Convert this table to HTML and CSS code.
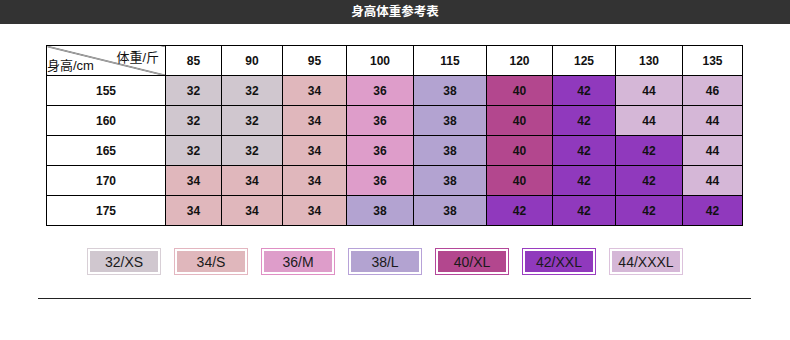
FILE: index.html
```html
<!DOCTYPE html>
<html lang="zh">
<head>
<meta charset="utf-8">
<link rel="stylesheet" href="styles.css">
</head>
<body>
<div class="title-bar">身高体重参考表</div>
<table class="size-table">
  <colgroup>
    <col class="c0"><col class="c1"><col class="c2"><col class="c3"><col class="c4"><col class="c5"><col class="c6"><col class="c7"><col class="c8"><col class="c9">
  </colgroup>
  <tr class="head">
    <th class="corner"><span class="w">体重/斤</span><span class="h">身高/cm</span></th>
    <th>85</th><th>90</th><th>95</th><th>100</th><th>115</th><th>120</th><th>125</th><th>130</th><th>135</th>
  </tr>
  <tr>
    <th>155</th>
    <td class="s32">32</td><td class="s32">32</td><td class="s34">34</td><td class="s36">36</td><td class="s38">38</td><td class="s40">40</td><td class="s42">42</td><td class="s44">44</td><td class="s44">46</td>
  </tr>
  <tr>
    <th>160</th>
    <td class="s32">32</td><td class="s32">32</td><td class="s34">34</td><td class="s36">36</td><td class="s38">38</td><td class="s40">40</td><td class="s42">42</td><td class="s44">44</td><td class="s44">44</td>
  </tr>
  <tr>
    <th>165</th>
    <td class="s32">32</td><td class="s32">32</td><td class="s34">34</td><td class="s36">36</td><td class="s38">38</td><td class="s40">40</td><td class="s42">42</td><td class="s42">42</td><td class="s44">44</td>
  </tr>
  <tr>
    <th>170</th>
    <td class="s34">34</td><td class="s34">34</td><td class="s34">34</td><td class="s36">36</td><td class="s38">38</td><td class="s40">40</td><td class="s42">42</td><td class="s42">42</td><td class="s44">44</td>
  </tr>
  <tr>
    <th>175</th>
    <td class="s34">34</td><td class="s34">34</td><td class="s34">34</td><td class="s38">38</td><td class="s38">38</td><td class="s42">42</td><td class="s42">42</td><td class="s42">42</td><td class="s42">42</td>
  </tr>
</table>
<div class="legend">
  <div class="chip b32"><span class="s32">32/XS</span></div>
  <div class="chip b34"><span class="s34">34/S</span></div>
  <div class="chip b36"><span class="s36">36/M</span></div>
  <div class="chip b38"><span class="s38">38/L</span></div>
  <div class="chip b40"><span class="s40">40/XL</span></div>
  <div class="chip b42"><span class="s42">42/XXL</span></div>
  <div class="chip b44"><span class="s44">44/XXXL</span></div>
</div>
<div class="rule"></div>
</body>
</html>
```
FILE: styles.css
```css
html, body {
  margin: 0;
  padding: 0;
  background: #fff;
  font-family: "Liberation Sans", Arial, "Noto Sans CJK SC", sans-serif;
  color: #111;
}
.title-bar {
  height: 24px;
  line-height: 24px;
  background: #333333;
  color: #fff;
  font-size: 12.5px;
  font-weight: bold;
  text-align: center;
}
.size-table {
  margin: 21px 0 0 46px;
  border-collapse: collapse;
  table-layout: fixed;
  width: 696px;
}
.c0 { width: 119px; }
.c1 { width: 56px; }
.c2 { width: 61px; }
.c3 { width: 64px; }
.c4 { width: 67px; }
.c5 { width: 73px; }
.c6 { width: 66px; }
.c7 { width: 63px; }
.c8 { width: 67px; }
.c9 { width: 60px; }
.size-table th, .size-table td {
  border: 1px solid #000;
  height: 29px;
  padding: 0;
  text-align: center;
  font-size: 12px;
  font-weight: bold;
  color: #111;
}
.size-table .corner {
  position: relative;
  font-weight: normal;
  font-size: 13px;
  background: linear-gradient(to top right, transparent calc(50% - 0.8px), #111 50%, transparent calc(50% + 0.8px));
}
.corner .w {
  position: absolute;
  right: 6px;
  top: 1px;
}
.corner .h {
  position: absolute;
  left: 0;
  bottom: 1px;
}
.s32 { background: #d0c7cf; }
.s34 { background: #e0b7bc; }
.s36 { background: #de9dca; }
.s38 { background: #b3a3d1; }
.s40 { background: #b3478e; }
.s42 { background: #9039bd; }
.s44 { background: #d5b7d7; }
.legend {
  display: flex;
  gap: 13px;
  margin: 22px 0 0 87px;
}
.chip {
  width: 74px;
  height: 27px;
  box-sizing: border-box;
  border: 1px solid;
  padding: 2px;
  background: #fff;
  display: flex;
}
.chip span {
  flex: 1;
  display: flex;
  align-items: center;
  justify-content: center;
  font-size: 14px;
  color: #1a1a1a;
}
.b32 { border-color: #d8cfd6; }
.b34 { border-color: #e3b6c0; }
.b36 { border-color: #df8fc4; }
.b38 { border-color: #b7a2d8; }
.b40 { border-color: #b4479a; }
.b42 { border-color: #9a3dc0; }
.b44 { border-color: #dcc2dc; }
.rule {
  margin: 23px 0 0 38px;
  width: 713px;
  height: 1px;
  background: #222;
}
```
